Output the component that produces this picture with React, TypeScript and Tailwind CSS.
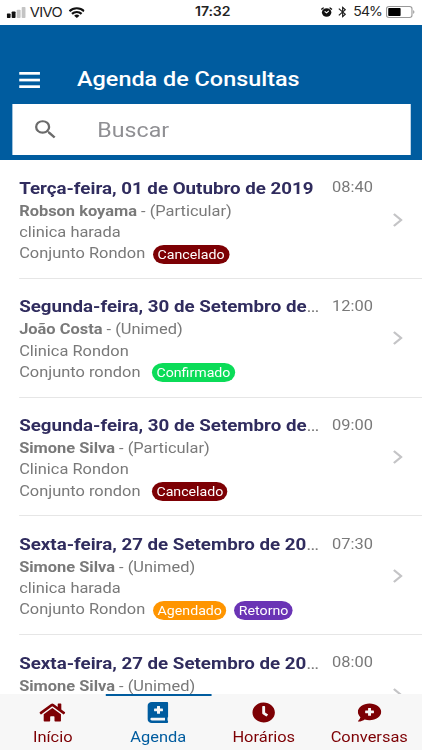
import React from 'react';
import { FaBookMedical, FaClock, FaCommentMedical, FaHome } from 'react-icons/fa';
import { MdBluetooth, MdSearch } from 'react-icons/md';

interface Badge {
  label: string;
  color: string;
}

interface Appointment {
  date: string;
  shortened?: boolean;
  time: string;
  patient: string;
  plan: string;
  clinic?: string;
  place?: string;
  badges: Badge[];
}

const canceled: Badge = { label: 'Cancelado', color: 'bg-[#7d0004]' };
const confirmed: Badge = { label: 'Confirmado', color: 'bg-[#0bdc58]' };
const scheduled: Badge = { label: 'Agendado', color: 'bg-[#ff9500]' };
const followUp: Badge = { label: 'Retorno', color: 'bg-[#6a34b5]' };

const appointments: Appointment[] = [
  {
    date: 'Terça-feira, 01 de Outubro de 2019',
    time: '08:40',
    patient: 'Robson koyama',
    plan: 'Particular',
    clinic: 'clinica harada',
    place: 'Conjunto Rondon',
    badges: [canceled],
  },
  {
    date: 'Segunda-feira, 30 de Setembro de',
    shortened: true,
    time: '12:00',
    patient: 'João Costa',
    plan: 'Unimed',
    clinic: 'Clinica Rondon',
    place: 'Conjunto rondon',
    badges: [confirmed],
  },
  {
    date: 'Segunda-feira, 30 de Setembro de',
    shortened: true,
    time: '09:00',
    patient: 'Simone Silva',
    plan: 'Particular',
    clinic: 'Clinica Rondon',
    place: 'Conjunto rondon',
    badges: [canceled],
  },
  {
    date: 'Sexta-feira, 27 de Setembro de 20',
    shortened: true,
    time: '07:30',
    patient: 'Simone Silva',
    plan: 'Unimed',
    clinic: 'clinica harada',
    place: 'Conjunto Rondon',
    badges: [scheduled, followUp],
  },
  {
    date: 'Sexta-feira, 27 de Setembro de 20',
    shortened: true,
    time: '08:00',
    patient: 'Simone Silva',
    plan: 'Unimed',
    badges: [],
  },
];

const tabs = [
  { label: 'Início', icon: FaHome, iconSize: 'w-[23px]', active: false },
  { label: 'Agenda', icon: FaBookMedical, iconSize: 'w-[18.4px]', active: true },
  { label: 'Horários', icon: FaClock, iconSize: 'w-[20.6px]', active: false },
  { label: 'Conversas', icon: FaCommentMedical, iconSize: 'w-[20.8px]', active: false },
];

function StatusBar() {
  return (
    <div className="grid h-[25px] shrink-0 grid-cols-[1fr_auto_1fr] items-center bg-white px-[6px] pb-[1px] font-[Inter,sans-serif] text-[12.5px] leading-none text-[#222]">
      <div className="flex items-center">
        <svg className="h-[11px] w-[17px]" viewBox="0 0 17 12" preserveAspectRatio="none">
          <rect x="0" y="7" width="3.4" height="5" rx="0.8" fill="#111" />
          <rect x="4.4" y="5" width="3.4" height="7" rx="0.8" fill="#111" />
          <rect x="8.9" y="3" width="3.4" height="9" rx="0.8" fill="#c4c4c4" />
          <rect x="13.3" y="0" width="3.4" height="12" rx="0.8" fill="#c4c4c4" />
        </svg>
        <span className="ml-[3.5px] pt-px text-[13px] tracking-[-0.6px]">VIVO</span>
        <svg className="ml-[5.5px] h-[11px] w-[14.5px]" viewBox="0 0 16 11" preserveAspectRatio="none" fill="none" stroke="#111" strokeWidth="2.2">
          <path d="M0.8 4.2 A10.3 10.3 0 0 1 15.2 4.2" />
          <path d="M3.3 6.9 A6.8 6.8 0 0 1 12.7 6.9" />
          <path d="M8 11 L5.4 8.7 A3.7 3.7 0 0 1 10.6 8.7 Z" fill="#111" stroke="none" />
        </svg>
      </div>
      <span className="ml-[3px] pt-px font-semibold tracking-[-0.1px]">17:32</span>
      <div className="flex items-center justify-end">
        <svg className="h-[12px] w-[10.5px]" viewBox="0 0 12 12" fill="none" stroke="#111">
          <circle cx="6" cy="6.6" r="4.8" fill="#111" stroke="none" />
          <path d="M0.6 3.2 L3 1 M11.4 3.2 L9 1" strokeWidth="1.5" />
          <path d="M4 5.2 L6 7 L8.2 4.8" stroke="#fff" strokeWidth="1.2" />
        </svg>
        <MdBluetooth className="ml-[2px] h-[14px] w-[13px]" />
        <span className="ml-[3px] pt-px tracking-[-0.8px]">54%</span>
        <svg className="ml-[3.5px] h-3 w-[26px]" viewBox="0 0 26 12">
          <rect x="0.5" y="0.5" width="22.6" height="11" rx="2.2" fill="#fff" stroke="#999" />
          <rect x="2" y="2" width="11" height="8" rx="0.8" fill="#000" />
          <path d="M24.2 4 Q26.4 6 24.2 8 Z" fill="#999" />
        </svg>
      </div>
    </div>
  );
}

function Header() {
  return (
    <header className="flex h-[135px] shrink-0 flex-col bg-[#005c9f] pt-[30px]">
      <div className="flex h-[49px] items-center pl-[17px]">
        <svg className="mt-[1px] h-4 w-[18.5px]" viewBox="0 0 19 16" preserveAspectRatio="none" fill="#fff">
          <rect width="19" height="2.7" />
          <rect y="6.7" width="19" height="2.7" />
          <rect y="13.3" width="19" height="2.7" />
        </svg>
        <h1 className="ml-[33px] pt-px text-[20.8px] font-medium text-white">Agenda de Consultas</h1>
      </div>
      <div className="mx-[10.5px] flex h-[51px] items-center bg-white pl-[17px]">
        <MdSearch className="h-[25px] w-[25px] text-[#6b6b6b]" />
        <span className="ml-[34px] pt-px text-[20.6px] text-[#8f8f93]">Buscar</span>
      </div>
    </header>
  );
}

function AppointmentRow({ item }: { item: Appointment }) {
  return (
    <li className="ml-[17px] flex h-[118.75px] shrink-0 border-b border-[#e6e6e6] pt-[15.5px] text-[14.6px] leading-[21.3px] text-[#797979]">
      <div className="min-w-0 flex-1">
        <div className="flex h-[25px] items-center">
          <h2 className="w-[268px] text-[17px] leading-[24px] whitespace-nowrap">
            <span className="text-[16.65px] font-bold text-[#302c5e]">{item.date}</span>
            {item.shortened && '…'}
          </h2>
          <span className="ml-[10px]">{item.time}</span>
        </div>
        <p>
          <b className="font-bold">{item.patient}</b> - ({item.plan})
        </p>
        {item.clinic && <p>{item.clinic}</p>}
        {item.place && (
          <div className="flex">
            <span className="min-w-[111px]">{item.place}</span>
            <div className="ml-[7px] flex gap-[7px] pt-[1.5px]">
              {item.badges.map((badge) => (
                <span
                  key={badge.label}
                  className={`h-[19px] rounded-[10px] px-[4px] text-[12.6px] leading-[19px] text-white ${badge.color}`}
                >
                  {badge.label}
                </span>
              ))}
            </div>
          </div>
        )}
      </div>
      <svg className="mt-[37px] mr-[17px] h-[14px] w-[9px]" viewBox="0 0 9 14" fill="none" stroke="#c4c4c6" strokeWidth="2">
        <path d="M1 1 L7.5 7 L1 13" />
      </svg>
    </li>
  );
}

function TabBar() {
  return (
    <nav className="grid h-[56px] shrink-0 grid-cols-4 bg-[#f7f7f7]">
      {tabs.map(({ label, icon: Icon, iconSize, active }) => (
        <div
          key={label}
          className={`flex flex-col items-center border-t-2 pt-[5.5px] ${
            active ? 'border-[#005c9f] text-[#005c9f]' : 'border-transparent text-[#7d0004]'
          }`}
        >
          <Icon className={`h-[21px] ${iconSize}`} />
          <span className="mt-[4.5px] text-[14.6px] leading-[20px]">{label}</span>
        </div>
      ))}
    </nav>
  );
}

export default function App() {
  return (
    <div className="h-[750px] w-[422px] overflow-hidden bg-white">
      {/* 375pt wide screen, widened to fill the window */}
      <div className="flex h-[750px] w-[375px] origin-top-left scale-x-[1.1253] flex-col font-[Roboto,sans-serif]">
        <StatusBar />
        <Header />
        <ul className="flex min-h-0 flex-1 flex-col overflow-hidden">
          {appointments.map((item, i) => (
            <AppointmentRow key={i} item={item} />
          ))}
        </ul>
        <TabBar />
      </div>
    </div>
  );
}
